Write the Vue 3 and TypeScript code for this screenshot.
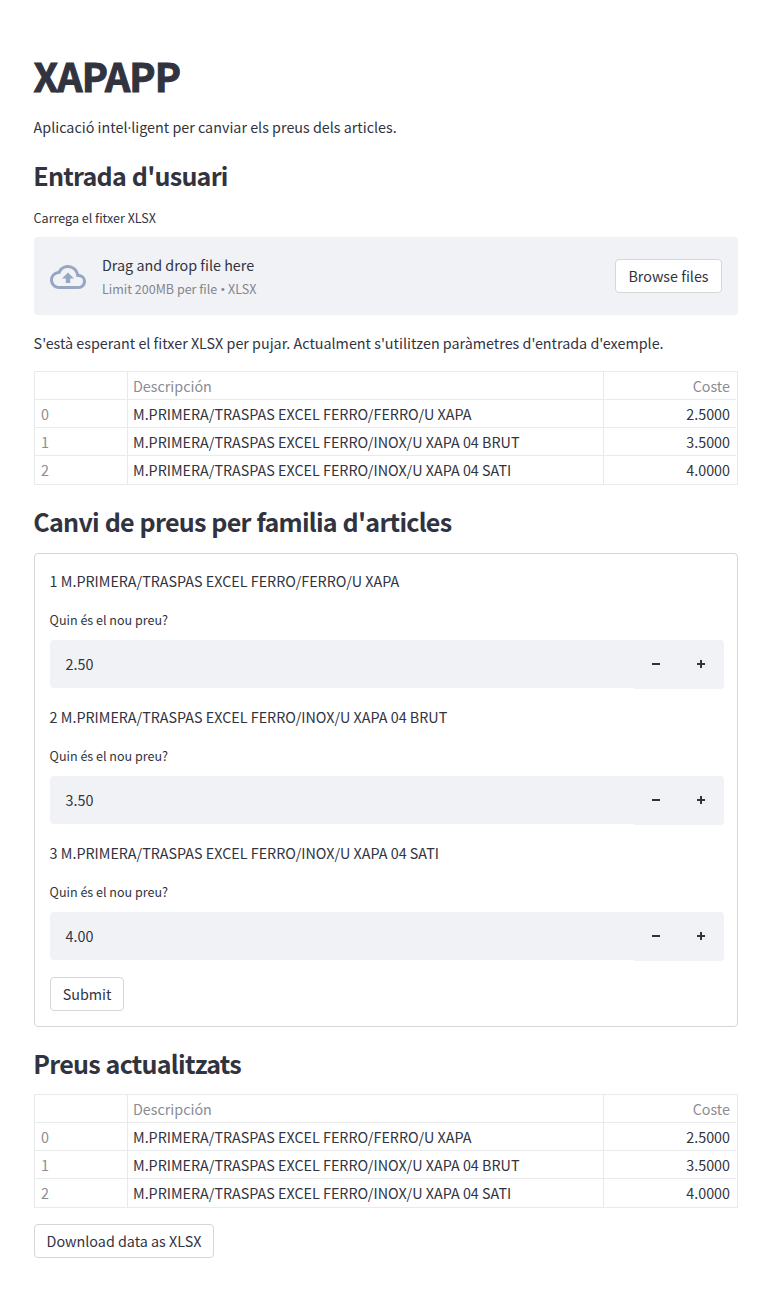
<script setup lang="ts">
import { ref } from 'vue'

interface Article {
  name: string
  cost: number
}

const articles: Article[] = [
  { name: 'M.PRIMERA/TRASPAS EXCEL FERRO/FERRO/U XAPA', cost: 2.5 },
  { name: 'M.PRIMERA/TRASPAS EXCEL FERRO/INOX/U XAPA 04 BRUT', cost: 3.5 },
  { name: 'M.PRIMERA/TRASPAS EXCEL FERRO/INOX/U XAPA 04 SATI', cost: 4 },
]

const prices = ref<number[]>(articles.map((a) => a.cost))
const updated = ref<Article[]>(articles.map((a) => ({ ...a })))

function step(index: number, delta: number): void {
  prices.value[index] = Math.max(0, prices.value[index] + delta)
}

function submit(): void {
  updated.value = articles.map((a, i) => ({ name: a.name, cost: prices.value[i] }))
}
</script>

<template>
  <main class="page">
    <h1>XAPAPP</h1>
    <p class="intro">Aplicació intel<span class="dot">·</span>ligent per canviar els preus dels articles.</p>

    <h2 class="first">Entrada d'usuari</h2>
    <span class="label upload-label">Carrega el fitxer XLSX</span>
    <section class="uploader">
      <svg class="cloud" viewBox="0 0 24 24" width="36" height="36">
        <path
          d="M19.35 10.04A7.49 7.49 0 0012 4C9.11 4 6.6 5.64 5.35 8.04A5.994 5.994 0 000 14c0 3.31 2.69 6 6 6h13c2.76 0 5-2.24 5-5 0-2.64-2.05-4.78-4.65-4.96zM19 18H6c-2.21 0-4-1.79-4-4 0-2.05 1.53-3.76 3.56-3.97l1.07-.11.5-.95A5.469 5.469 0 0112 6c2.62 0 4.88 1.86 5.39 4.43l.3 1.5 1.53.11A2.98 2.98 0 0122 15c0 1.65-1.35 3-3 3zM8 13h2.55v3h2.9v-3H16l-4-4z"
        />
      </svg>
      <div class="drop">
        <span class="drop-title">Drag and drop file here</span>
        <small>Limit 200MB per file <span class="dot">•</span> XLSX</small>
      </div>
      <button type="button" class="btn browse">Browse files</button>
    </section>
    <p class="waiting">
      S'està esperant el fitxer XLSX per pujar. Actualment s'utilitzen paràmetres d'entrada d'exemple.
    </p>

    <div class="grid">
      <div class="row head">
        <span class="cell"></span>
        <span class="cell">Descripción</span>
        <span class="cell num">Coste</span>
      </div>
      <div v-for="(a, i) in articles" :key="i" class="row">
        <span class="cell idx">{{ i }}</span>
        <span class="cell">{{ a.name }}</span>
        <span class="cell num">{{ a.cost.toFixed(4) }}</span>
      </div>
    </div>

    <h2 class="families">Canvi de preus per familia d'articles</h2>
    <form class="form" @submit.prevent="submit">
      <div v-for="(a, i) in articles" :key="i" class="field">
        <p>{{ i + 1 }} {{ a.name }}</p>
        <span class="label">Quin és el nou preu?</span>
        <div class="number">
          <div class="value">{{ prices[i].toFixed(2) }}</div>
          <button type="button" class="step" @click="step(i, -0.01)">
            <svg viewBox="0 0 8 8" width="8" height="8"><path d="M0 3v2h8V3z" /></svg>
          </button>
          <button type="button" class="step last" @click="step(i, 0.01)">
            <svg viewBox="0 0 8 8" width="8" height="8">
              <path d="M3 0v3H0v2h3v3h2V5h3V3H5V0z" />
            </svg>
          </button>
        </div>
      </div>
      <button type="submit" class="btn submit">Submit</button>
    </form>

    <h2>Preus actualitzats</h2>
    <div class="grid">
      <div class="row head">
        <span class="cell"></span>
        <span class="cell">Descripción</span>
        <span class="cell num">Coste</span>
      </div>
      <div v-for="(a, i) in updated" :key="i" class="row">
        <span class="cell idx">{{ i }}</span>
        <span class="cell">{{ a.name }}</span>
        <span class="cell num">{{ a.cost.toFixed(4) }}</span>
      </div>
    </div>
    <button type="button" class="btn download">Download data as XLSX</button>
  </main>
</template>

<style>
body {
  background: #fff;
}
</style>

<style scoped>
.page {
  box-sizing: border-box;
  width: 770px;
  height: 1304px;
  padding: 53px 32px 0 34px;
  display: flex;
  flex-direction: column;
  color: #31333f;
  font-family: 'Noto Sans CJK SC', 'Noto Sans', sans-serif;
  font-size: 14.33px;
  font-variant-ligatures: none;
}
h1,
h2,
p {
  margin: 0;
  white-space: nowrap;
}
h1 {
  margin-left: -0.5px;
  font-size: 39.4px;
  line-height: 44px;
  font-weight: 700;
  letter-spacing: -0.8px;
  -webkit-text-stroke: 1px #31333f;
}
h2 {
  margin: 19px 0 14px -0.7px;
  font-size: 25.07px;
  line-height: 34px;
  height: 34px;
  font-weight: 600;
  letter-spacing: -0.75px;
  word-spacing: 0.8px;
}
h2.first {
  margin-top: 18px;
  margin-bottom: 16px;
}
h2.families {
  margin-bottom: 15px;
}
p {
  line-height: 26px;
}
.intro {
  height: 26px;
  margin-top: 17px;
}
.dot {
  font-family: 'Open Sans', 'Noto Sans', sans-serif;
  line-height: 1;
}
small .dot {
  font-size: 13.5px;
}
.label {
  display: block;
  font-size: 12.54px;
  line-height: 20px;
}
.upload-label {
  margin-bottom: 9px;
}
.intro,
.upload-label,
.waiting,
.field p,
.field .label {
  text-indent: -0.4px;
}
.uploader {
  box-sizing: border-box;
  height: 78px;
  padding: 0 16px;
  display: flex;
  align-items: center;
  background: #f0f2f6;
  border-radius: 4px;
}
.cloud {
  fill: #97a6c3;
  margin: 1px 16px 0 0;
}
.drop {
  flex: 1;
  display: flex;
  flex-direction: column;
}
.drop-title {
  line-height: 24px;
  margin-bottom: 2px;
}
small {
  height: 20px;
  font-size: 12.54px;
  line-height: 20px;
  color: #83858c;
}
.btn {
  box-sizing: border-box;
  height: 34px;
  padding: 0;
  border: 1px solid #d6d6d9;
  border-radius: 4px;
  background: #fff;
  color: inherit;
  font: inherit;
  line-height: 32px;
  white-space: nowrap;
}
.browse {
  width: 107px;
}
.submit {
  display: block;
  width: 74px;
  margin-top: 1px;
}
.download {
  width: 180px;
  margin-top: 16px;
}
.waiting {
  margin: 15px 0;
}
.grid {
  box-sizing: border-box;
  height: 114px;
  border: 1px solid #e9eaeb;
  padding-right: 1px;
}
.row {
  display: grid;
  grid-template-columns: 93px 476px 1fr;
  height: 28px;
}
.cell {
  box-sizing: border-box;
  height: 28px;
  padding: 0 5px;
  line-height: 27px;
  border-right: 1px solid #e9eaeb;
  border-bottom: 1px solid #e9eaeb;
  white-space: nowrap;
}
.cell:first-child {
  padding-left: 6px;
}
.cell:last-child {
  border-right: 0;
  padding-right: 6px;
}
.row:last-child .cell {
  border-bottom: 0;
}
.num {
  text-align: right;
}
.head,
.idx {
  color: #8b8c93;
}
.form {
  box-sizing: border-box;
  height: 474px;
  padding: 14px 13px 15px 15px;
  border: 1px solid #d6d6d9;
  border-radius: 4px;
}
.field {
  height: 136px;
}
.field .label {
  margin: 16px 0 10px;
}
.number {
  display: flex;
  align-items: flex-start;
}
.value {
  flex: 1;
  height: 48px;
  padding-left: 15.5px;
  line-height: 48px;
  background: #f0f2f6;
  border-radius: 4px 0 0 4px;
}
.step {
  width: 45px;
  height: 49px;
  padding: 0 1px 1px 0;
  border: 0;
  display: flex;
  align-items: center;
  justify-content: center;
  background: #f0f2f6;
  color: inherit;
}
.step.last {
  border-radius: 0 4px 4px 0;
}
.step svg {
  fill: #31333f;
}
</style>
